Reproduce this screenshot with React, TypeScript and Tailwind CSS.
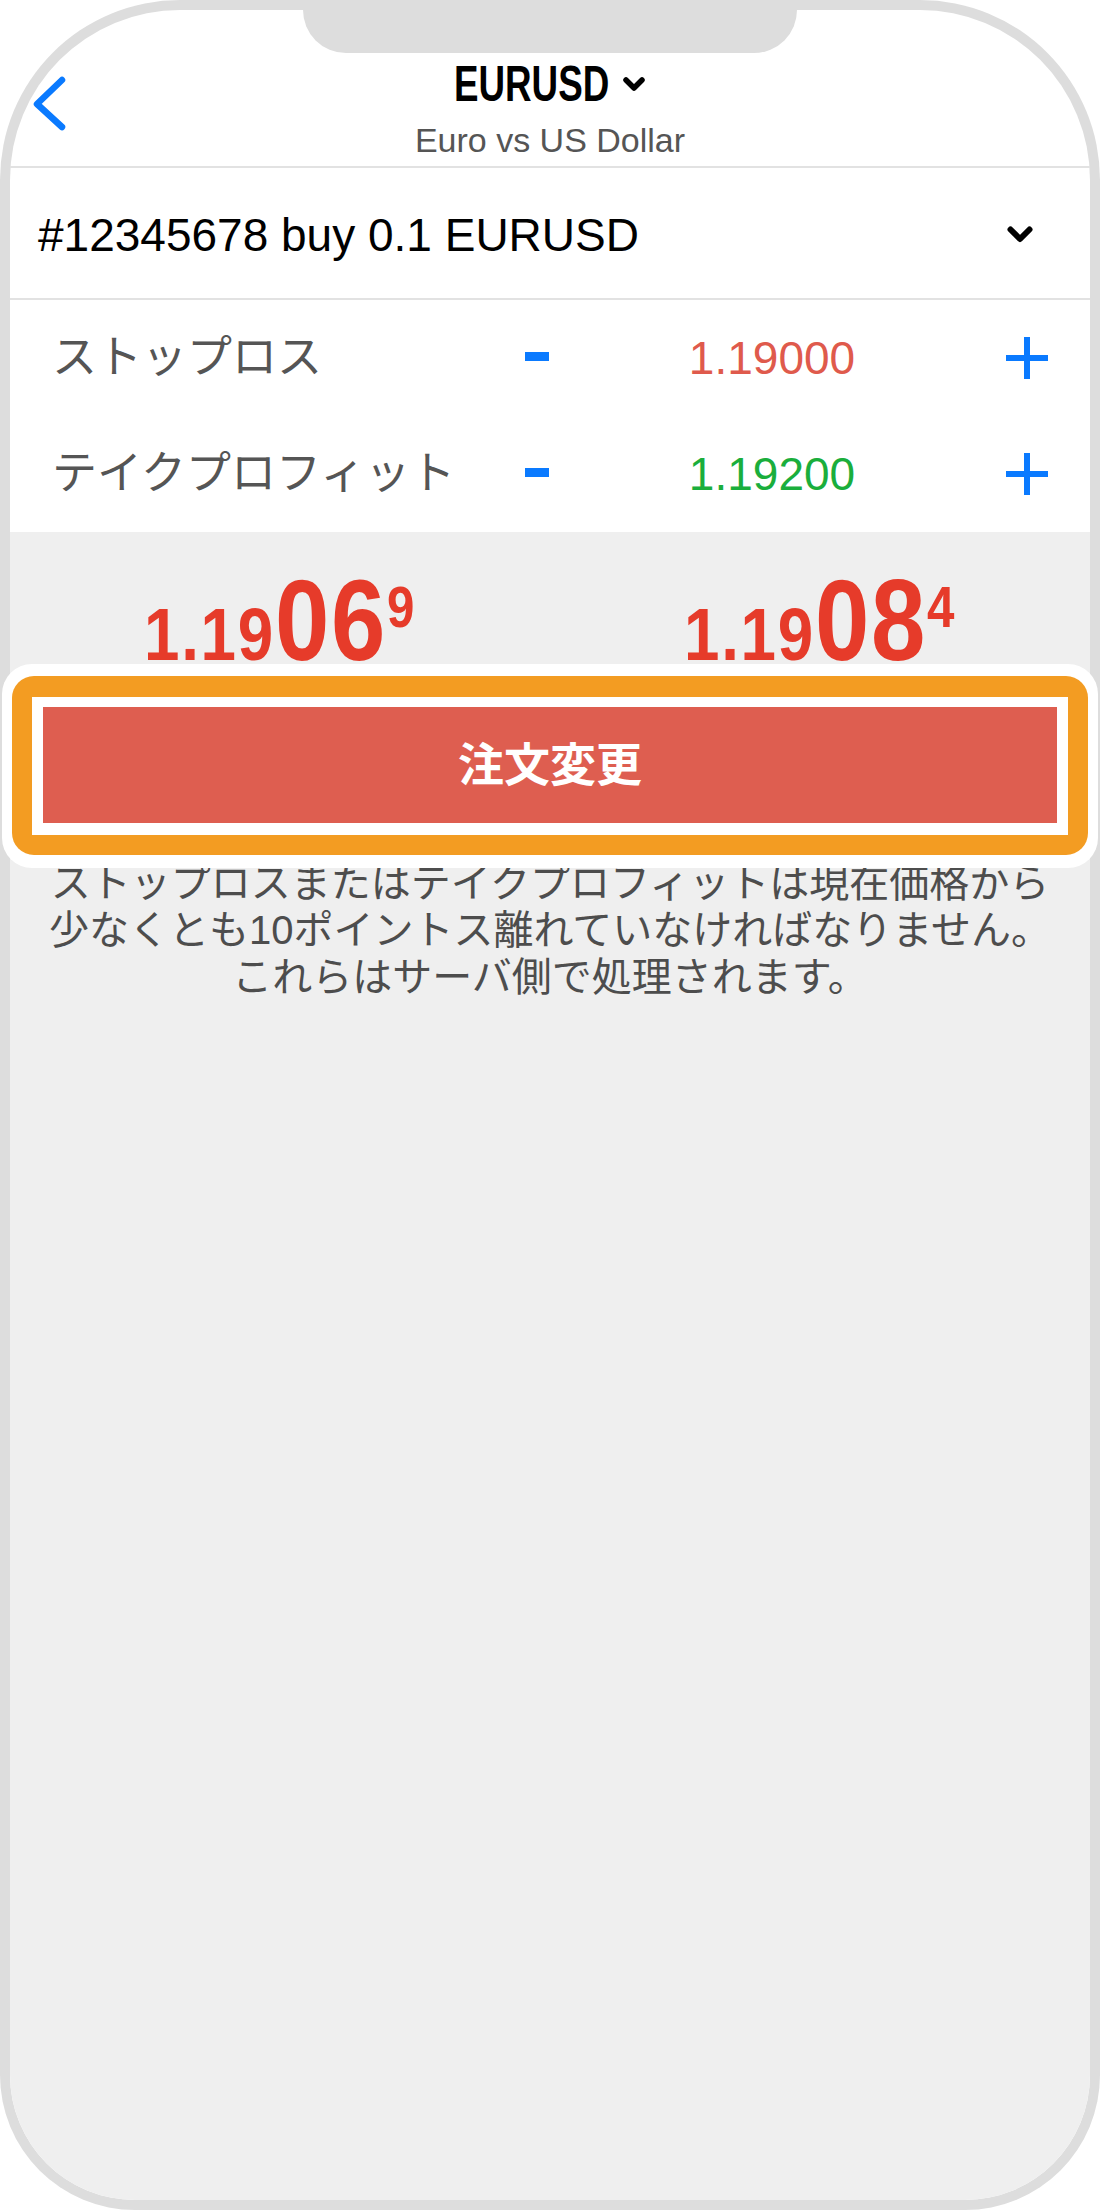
const BLUE = "#0a7aff";

interface LevelRowProps {
  label: string;
  value: string;
  color: string;
}

const LevelRow = ({ label, value, color }: LevelRowProps) => {
  return (
    <div className="flex h-[116px] items-center pl-[42px]">
      <div className="w-[461px] text-[45px] text-[#555555]">{label}</div>
      <div className="flex w-[48px] justify-center">
        <div className="mb-[4px] h-[9px] w-[24px] bg-[#0a7aff]" />
      </div>
      <div
        className="w-[422px] text-center text-[46px]"
        style={{ color }}
      >
        {value}
      </div>
      <div className="flex w-[88px] justify-center">
        <svg width="42" height="42" viewBox="0 0 42 42">
          <rect x="18" y="0" width="6" height="42" fill={BLUE} />
          <rect x="0" y="18" width="42" height="6" fill={BLUE} />
        </svg>
      </div>
    </div>
  );
};

interface PriceProps {
  head: string;
  big: string;
  tail: string;
}

const Price = ({ head, big, tail }: PriceProps) => {
  return (
    <div className="text-center text-[115px] leading-none font-bold text-[#e63b2a]">
      {/* no narrow face installed, squeeze the regular one */}
      <span className="inline-block scale-x-[0.85] tracking-[2px]">
        <span className="text-[75px]">{head}</span>
        <span>{big}</span>
        <span className="align-[33px] text-[58px]">{tail}</span>
      </span>
    </div>
  );
};

export default function App() {
  return (
    <div className="h-[2210px] w-[1100px] rounded-t-[180px] rounded-b-[135px] bg-[#dddddd] p-[10px] font-['Liberation_Sans','Noto_Sans_CJK_JP',sans-serif]">
      <div className="flex h-full flex-col rounded-t-[170px] rounded-b-[125px] bg-white">
        {/* notch */}
        <div className="mx-auto h-[43px] w-[494px] shrink-0 rounded-b-[44px] bg-[#dddddd]" />

        {/* header */}
        <div className="grid h-[115px] shrink-0 grid-cols-[1fr_auto_1fr] border-b-2 border-[#e2e2e2]">
          <div className="pl-[20px] pt-[21px]">
            <svg width="40" height="60" viewBox="0 0 40 60" fill="none">
              <path
                d="M32 6 L7 30 L32 53"
                stroke={BLUE}
                strokeWidth="6.5"
                strokeLinecap="round"
                strokeLinejoin="round"
              />
            </svg>
          </div>
          <div className="flex flex-col items-center pt-[6px]">
            <div className="flex items-center">
              <span className="-mr-[56px] inline-block origin-left scale-x-[0.735] text-[50px] leading-[50px] font-bold text-black">
                EURUSD
              </span>
              <svg className="ml-[13px]" width="24" height="16" viewBox="0 0 24 16" fill="none">
                <path
                  d="M4 4 L12 12 L20 4"
                  stroke="#000"
                  strokeWidth="5.5"
                  strokeLinecap="round"
                  strokeLinejoin="round"
                />
              </svg>
            </div>
            <div className="mt-[11px] text-[34px] leading-[40px] text-[#555555]">
              Euro vs US Dollar
            </div>
          </div>
          <div />
        </div>

        {/* order select */}
        <div className="flex h-[132px] shrink-0 items-center justify-between border-b-2 border-[#e2e2e2] pt-[5px] pl-[28px] pr-[57px]">
          <span className="text-[46px] text-black">#12345678 buy 0.1 EURUSD</span>
          <svg width="26" height="19" viewBox="0 0 26 19" fill="none">
            <path
              d="M3.5 3.5 L13 13 L22.5 3.5"
              stroke="#000"
              strokeWidth="6"
              strokeLinecap="round"
              strokeLinejoin="round"
            />
          </svg>
        </div>

        {/* sl / tp */}
        <div className="shrink-0">
          <LevelRow label="ストップロス" value="1.19000" color="#df5a4c" />
          <LevelRow label="テイクプロフィット" value="1.19200" color="#1aae3c" />
        </div>

        {/* quotes + action */}
        <div className="flex flex-1 flex-col rounded-b-[125px] bg-[#efefef]">
          <div className="grid h-[132px] grid-cols-2 pt-[31px]">
            <Price head="1.19" big="06" tail="9" />
            <Price head="1.19" big="08" tail="4" />
          </div>

          <div className="relative z-10 -mx-[8px] rounded-[30px] bg-white px-[10px] pt-[12px] pb-[13px]">
            <div className="rounded-[22px] bg-[#f39c22] px-[20px] pt-[21px] pb-[20px]">
              <div className="bg-white px-[11px] pt-[10px] pb-[12px]">
                <div className="flex h-[116px] items-center justify-center bg-[#de5e50] text-[46px] font-bold text-white">
                  注文変更
                </div>
              </div>
            </div>
          </div>

          <p className="-mt-[8px] text-center text-[40px] leading-[47px] text-[#4d4d4d]">
            ストップロスまたはテイクプロフィットは現在価格から
            <br />
            少なくとも10ポイントス離れていなければなりません。
            <br />
            これらはサーバ側で処理されます。
          </p>
        </div>
      </div>
    </div>
  );
}
